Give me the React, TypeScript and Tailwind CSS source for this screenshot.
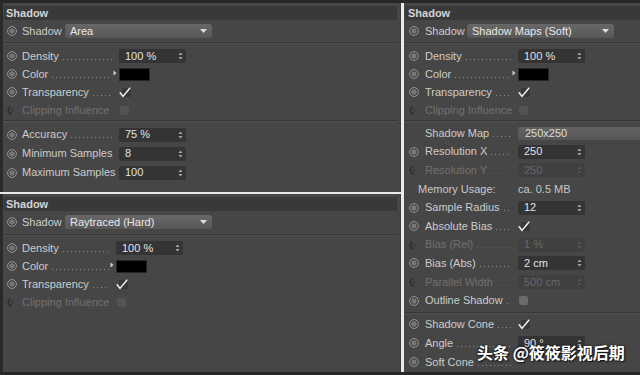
import React from 'react';

type RadioKind = 'on' | 'off' | 'none';

function Radio({ kind }: { kind: RadioKind }) {
  if (kind === 'none') return <span className="w-[10px] h-[10px]" />;
  if (kind === 'off')
    return (
      <svg width="10" height="10" viewBox="0 0 10 10">
        <path d="M3.2 1.6 A4 4 0 0 0 5 9" stroke="#2e2e2e" strokeWidth="1.6" fill="none" />
        <circle cx="5" cy="5" r="1.6" fill="#3c3c3c" />
      </svg>
    );
  return (
    <svg width="10" height="10" viewBox="0 0 10 10">
      <circle cx="5" cy="5" r="4.4" fill="#3f3f3f" stroke="#9a9a9a" strokeWidth="1" />
      <circle cx="5" cy="5" r="2.7" fill="#767676" />
    </svg>
  );
}

function Spin({ dim }: { dim?: boolean }) {
  return (
    <svg width="5" height="8" viewBox="0 0 5 8">
      <path d="M0.5 3 L2.5 0.5 L4.5 3 Z M0.5 5 L2.5 7.5 L4.5 5 Z" fill={dim ? '#565656' : '#a8a8a8'} />
    </svg>
  );
}

function NumBox({ value, dim }: { value: string; dim?: boolean }) {
  return (
    <div
      className={`w-[67px] h-[14px] rounded-[2px] flex items-center justify-between pl-[6px] pr-[3px] ${
        dim ? 'bg-[#404040] text-[#686868]' : 'bg-[#343434] text-[#e2e2e2]'
      }`}
    >
      <span>{value}</span>
      <Spin dim={dim} />
    </div>
  );
}

function Check() {
  return (
    <svg width="13" height="11" viewBox="0 0 13 11">
      <rect x="3" y="1" width="9" height="9" rx="1.5" fill="#383838" />
      <path d="M1.2 5.8 L4 9.4 L10.8 1.2" stroke="#f2f2f2" strokeWidth="1.5" fill="none" strokeLinecap="round" />
    </svg>
  );
}

function Box({ light }: { light?: boolean }) {
  return (
    <span
      className={`inline-block w-[9px] h-[9px] rounded-[2px] ml-[1px] ${light ? 'bg-[#6a6a6a]' : 'bg-[#535353]'}`}
    />
  );
}

function Swatch() {
  return <span className="inline-block w-[31px] h-[13px] bg-black border border-[#262626]" />;
}

// leader dots drawn as a repeating 1px tile
function Dots({ dim }: { dim?: boolean }) {
  return (
    <span
      className={`flex-1 min-w-0 h-[1px] mb-[2px] ml-[4px] bg-[length:4px_1px] bg-repeat-x ${
        dim
          ? 'bg-[linear-gradient(to_right,#5e5e5e_1px,transparent_1px)]'
          : 'bg-[linear-gradient(to_right,#8c8c8c_1px,transparent_1px)]'
      }`}
    />
  );
}

function Arrow() {
  return (
    <svg width="4" height="6" viewBox="0 0 4 6">
      <path d="M0.5 0.5 L3.5 3 L0.5 5.5 Z" fill="#cfcfcf" />
    </svg>
  );
}

function Row({
  radio = 'on',
  label,
  dim,
  dots = true,
  arrow,
  h = 'h-[18px]',
  side = 'left',
  labelW = 'w-[90px]',
  children,
}: {
  radio?: RadioKind;
  label: string;
  dim?: boolean;
  dots?: boolean;
  arrow?: boolean;
  h?: string;
  side?: 'left' | 'right';
  labelW?: string;
  children?: React.ReactNode;
}) {
  return (
    <div className={`flex items-center ${h}`}>
      <div className={`flex items-center shrink-0 ${side === 'left' ? 'w-[19px] pl-[4px]' : 'w-[21px] pl-[5px]'}`}>
        <Radio kind={radio} />
      </div>
      <div className={`flex items-end shrink-0 ${labelW}`}>
        <span className={`whitespace-nowrap leading-none ${dim ? 'text-[#717171]' : 'text-[#cccccc]'}`}>{label}</span>
        {dots && <Dots dim={dim} />}
      </div>
      <div className="w-[7px] shrink-0 flex justify-start pl-[1px] -mt-[3px]">{arrow && <Arrow />}</div>
      {children}
    </div>
  );
}

function Header({ right }: { right?: boolean }) {
  return (
    <div
      className={`mt-[3px] h-[14px] bg-[#393939] flex items-center font-bold text-[#d4d4d4] ${
        right ? 'ml-[1px] pl-[3px]' : 'ml-[1px] mr-[3px] pl-[2px]'
      }`}
    >
      Shadow
    </div>
  );
}

function Sep({ right, mt = 'mt-[2px]' }: { right?: boolean; mt?: string }) {
  return (
    <div
      className={`${mt} h-[2px] border-t border-b border-t-[#363636] border-b-[#4f4f4f] ${
        right ? 'ml-[1px]' : 'ml-[1px] mr-[3px]'
      }`}
    />
  );
}

function Dropdown({ value }: { value: string }) {
  return (
    <div className="w-[147px] h-[14px] rounded-[3px] bg-gradient-to-b from-[#676767] to-[#585858] flex items-center justify-between pl-[5px] pr-[5px] text-[#e8e8e8]">
      <span className="whitespace-nowrap">{value}</span>
      <svg width="7" height="4" viewBox="0 0 7 4">
        <path d="M0 0 L7 0 L3.5 4 Z" fill="#dedede" />
      </svg>
    </div>
  );
}

function ShadowRow({ value, side = 'left' }: { value: string; side?: 'left' | 'right' }) {
  return (
    <div className="flex items-center h-[18px] mt-[2px]">
      <div className={`flex items-center shrink-0 ${side === 'left' ? 'w-[19px] pl-[4px]' : 'w-[21px] pl-[5px]'}`}>
        <Radio kind="on" />
      </div>
      <span className={`text-[#cccccc] shrink-0 ${side === 'left' ? 'w-[43px]' : 'w-[42px]'}`}>Shadow</span>
      <Dropdown value={value} />
    </div>
  );
}

export default function App() {
  return (
    <div className="relative w-[640px] h-[375px] bg-[#282828] flex flex-col pt-[3px] pb-[3px] overflow-hidden font-['Liberation_Sans',Arial,sans-serif] text-[11px] leading-none">
      <div className="flex flex-1 min-h-0">
        {/* left column */}
        <div className="w-[401px] flex flex-col">
          <div className="h-[189px] pl-[3px] bg-[#2a2a2a]">
            <div className="h-full bg-[#464646] border-r border-[#3b3b3b] overflow-hidden">
              <Header />
              <ShadowRow value="Area" />
              <Sep />
              <div className="mt-[3px]">
                <Row label="Density">
                  <NumBox value="100 %" />
                </Row>
                <Row label="Color" arrow>
                  <Swatch />
                </Row>
                <Row label="Transparency">
                  <Check />
                </Row>
                <Row label="Clipping Influence" radio="off" dim dots={false}>
                  <Box />
                </Row>
              </div>
              <Sep mt="mt-[1px]" />
              <div className="mt-[3px]">
                <Row label="Accuracy" h="h-[19px]">
                  <NumBox value="75 %" />
                </Row>
                <Row label="Minimum Samples" h="h-[19px]" dots={false}>
                  <NumBox value="8" />
                </Row>
                <Row label="Maximum Samples" h="h-[19px]" dots={false}>
                  <NumBox value="100" />
                </Row>
              </div>
            </div>
          </div>
          <div className="h-[2px] bg-[#e9e9e9]" />
          <div className="flex-1 pl-[3px] bg-[#2a2a2a]">
            <div className="h-full bg-[#464646] border-r border-[#3b3b3b] overflow-hidden">
              <Header />
              <div className="mt-[1px]">
                <ShadowRow value="Raytraced (Hard)" />
              </div>
              <Sep mt="mt-[3px]" />
              <div className="mt-[3px]">
                <Row label="Density" labelW="w-[87px]">
                  <NumBox value="100 %" />
                </Row>
                <Row label="Color" arrow labelW="w-[87px]">
                  <Swatch />
                </Row>
                <Row label="Transparency" labelW="w-[87px]">
                  <Check />
                </Row>
                <Row label="Clipping Influence" radio="off" dim dots={false} labelW="w-[87px]">
                  <Box />
                </Row>
              </div>
            </div>
          </div>
        </div>

        <div className="w-[3px] bg-[#ececec]" />

        {/* right column */}
        <div className="flex-1 bg-[#464646] overflow-hidden">
          <Header right />
          <ShadowRow value="Shadow Maps (Soft)" side="right" />
          <Sep right />
          <div className="mt-[3px]">
            <Row side="right" label="Density" labelW="w-[86px]">
              <NumBox value="100 %" />
            </Row>
            <Row side="right" label="Color" arrow labelW="w-[86px]">
              <Swatch />
            </Row>
            <Row side="right" label="Transparency" labelW="w-[86px]">
              <Check />
            </Row>
            <Row side="right" label="Clipping Influence" radio="off" dim dots={false} labelW="w-[86px]">
              <Box />
            </Row>
          </div>
          <Sep right mt="mt-[1px]" />
          <div className="mt-[2px]">
            <Row side="right" radio="none" label="Shadow Map" h="h-[18.6px]" labelW="w-[86px]">
              <div className="flex-1 h-[13px] rounded-l-[2px] bg-gradient-to-b from-[#626262] to-[#565656] flex items-center pl-[7px] text-[#dcdcdc]">
                250x250
              </div>
            </Row>
            <Row side="right" label="Resolution X" h="h-[18.6px]" labelW="w-[86px]">
              <NumBox value="250" />
            </Row>
            <Row side="right" radio="off" dim label="Resolution Y" h="h-[18.6px]" labelW="w-[86px]">
              <NumBox value="250" dim />
            </Row>
            <div className="flex items-center h-[18.6px] pl-[14px] text-[#c8c8c8]">
              <span className="w-[100px] shrink-0">Memory Usage:</span>
              <span>ca. 0.5 MB</span>
            </div>
            <Row side="right" label="Sample Radius" h="h-[18.6px]" labelW="w-[86px]">
              <NumBox value="12" />
            </Row>
            <Row side="right" label="Absolute Bias" h="h-[18.6px]" labelW="w-[86px]">
              <Check />
            </Row>
            <Row side="right" radio="off" dim label="Bias (Rel)" h="h-[18.6px]" labelW="w-[86px]">
              <NumBox value="1 %" dim />
            </Row>
            <Row side="right" label="Bias (Abs)" h="h-[18.6px]" labelW="w-[86px]">
              <NumBox value="2 cm" />
            </Row>
            <Row side="right" radio="off" dim label="Parallel Width" h="h-[18.6px]" labelW="w-[86px]">
              <NumBox value="500 cm" dim />
            </Row>
            <Row side="right" label="Outline Shadow" h="h-[18.6px]" labelW="w-[86px]">
              <Box light />
            </Row>
          </div>
          <Sep right mt="mt-[2px]" />
          <div className="mt-[1px]">
            <Row side="right" label="Shadow Cone" h="h-[19px]" labelW="w-[86px]">
              <Check />
            </Row>
            <Row side="right" label="Angle" h="h-[19px]" labelW="w-[86px]">
              <NumBox value="90 °" />
            </Row>
            <Row side="right" label="Soft Cone" h="h-[19px]" labelW="w-[86px]" />
          </div>
        </div>
      </div>

      {/* watermark */}
      <div className="absolute left-[477px] top-[344px] text-white text-[16px] font-bold whitespace-nowrap font-['Noto_Sans_CJK_SC','Noto_Sans',sans-serif] [text-shadow:0_0_3px_rgba(0,0,0,0.8),1px_1px_1px_rgba(0,0,0,0.6)]">
        头条 @筱筱影视后期
      </div>
    </div>
  );
}
